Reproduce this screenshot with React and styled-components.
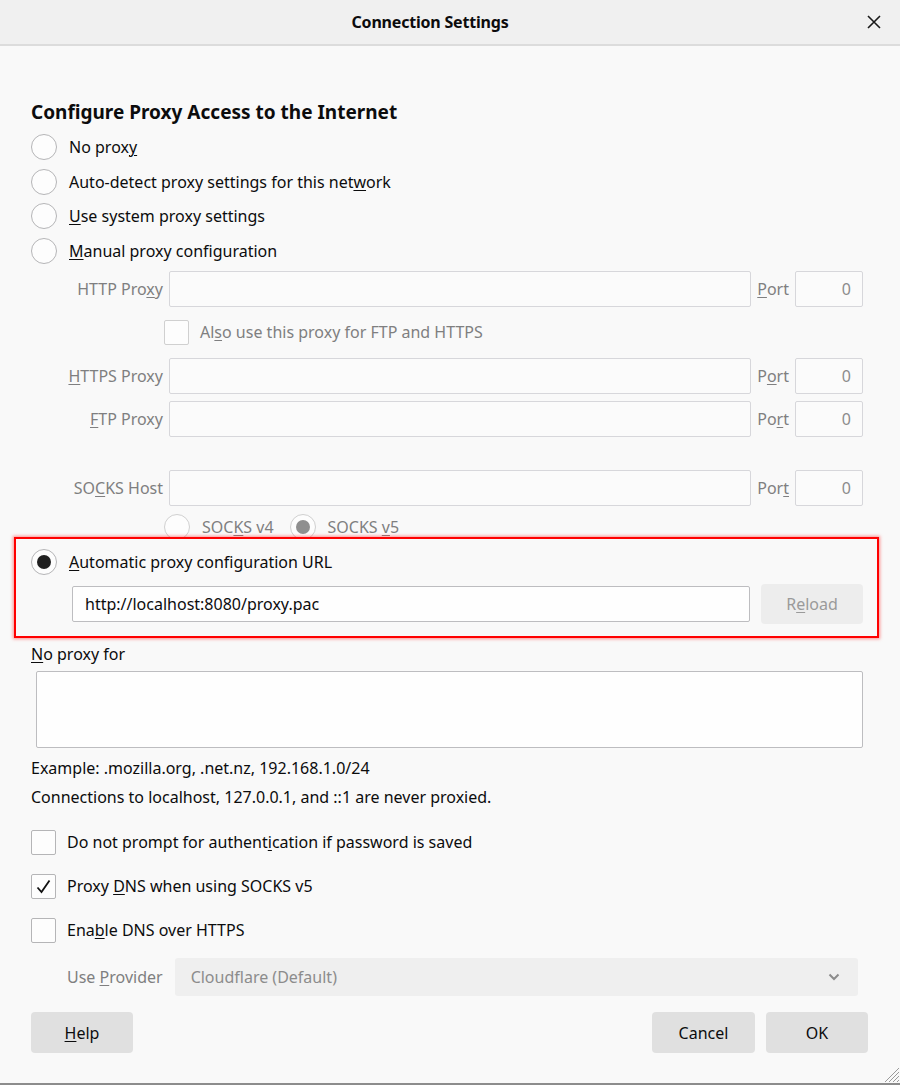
import React from "react";
import styled, { createGlobalStyle } from "styled-components";

const GlobalStyle = createGlobalStyle`
  html, body { margin: 0; padding: 0; background: #f9f9f9; }
  body { font-family: "Noto Sans", "Open Sans", sans-serif; color: #0c0c0d; }
  * { box-sizing: border-box; }
`;

const Window = styled.div`
  width: 900px;
  height: 1085px;
  background: #f9f9f9;
  display: flex;
  flex-direction: column;
  position: relative;
  border-bottom: 2px solid #8c8c8c;
  overflow: hidden;
`;

const TitleBar = styled.div`
  height: 46px;
  flex: none;
  display: flex;
  align-items: center;
  background: #f0f0f0;
  border-bottom: 2px solid #dcdcdc;
`;

const Title = styled.div`
  flex: 1;
  text-align: center;
  font-weight: 700;
  font-size: 16px;
  letter-spacing: -0.2px;
`;

const CloseBtn = styled.div`
  width: 28px;
  margin-right: 12px;
  display: flex;
  justify-content: center;
  align-items: center;
`;

const Content = styled.div`
  padding: 0 37px 0 31px;
  display: flex;
  flex-direction: column;
`;

const Heading = styled.h1`
  margin: 54px 0 0;
  font-size: 19px;
  line-height: 24px;
  font-weight: 700;
  letter-spacing: 0;
`;

const U = styled.span`
  text-decoration: underline;
  text-underline-offset: 2px;
  text-decoration-thickness: 1px;
`;

const RadioGroup = styled.div`
  margin-top: 5.6px;
  display: flex;
  flex-direction: column;
`;

const RadioRow = styled.div`
  height: ${(p) => p.$h || 34.7}px;
  display: flex;
  align-items: center;
  gap: ${(p) => p.$gap || 12}px;
  font-size: 16px;
  color: ${(p) => (p.$disabled ? "#7f7f80" : "#0c0c0d")};
`;

const RadioCircle = styled.span`
  width: 26px;
  height: 26px;
  flex: none;
  border-radius: 50%;
  border: 1.5px solid ${(p) => (p.$disabled ? "#d0d0d0" : "#b5b5b7")};
  background: #fdfdfd;
  display: flex;
  align-items: center;
  justify-content: center;
  &::after {
    content: "";
    display: ${(p) => (p.$checked ? "block" : "none")};
    width: 14px;
    height: 14px;
    border-radius: 50%;
    background: ${(p) => (p.$disabled ? "#8f8f8f" : "#202020")};
  }
`;

const Radio = ({ checked, disabled, children, h, gap }) => (
  <RadioRow $disabled={disabled} $h={h} $gap={gap}>
    <RadioCircle $checked={checked} $disabled={disabled} />
    <span>{children}</span>
  </RadioRow>
);

const ProxyGrid = styled.div`
  display: grid;
  grid-template-columns: 132px 1fr auto 68px;
  column-gap: 6px;
  align-items: center;
  height: 36px;
  margin-top: ${(p) => p.$mt || 0}px;
  font-size: 16px;
  color: #7f7f80;
`;

const FieldLabel = styled.span`
  text-align: right;
`;

const TextBox = styled.div`
  height: ${(p) => p.$h || 36}px;
  border: 1px solid #d7d7db;
  border-radius: 2px;
  display: flex;
  align-items: center;
  justify-content: ${(p) => (p.$right ? "flex-end" : "flex-start")};
  padding: 0 11px;
  font-size: 16px;
  color: ${(p) => (p.$dark ? "#0c0c0d" : "#8c8c8c")};
  border-color: ${(p) => (p.$dark ? "#bdbdc0" : "#d7d7db")};
  background: ${(p) => (p.$dark ? "#fefefe" : "#fbfbfb")};
`;

const ProxyRow = ({ label, port, mt }) => (
  <ProxyGrid $mt={mt}>
    <FieldLabel>{label}</FieldLabel>
    <TextBox />
    <span>{port}</span>
    <TextBox $right>0</TextBox>
  </ProxyGrid>
);

const CheckRow = styled.div`
  display: flex;
  align-items: center;
  gap: ${(p) => p.$gap || 11}px;
  height: ${(p) => p.$h || 44}px;
  margin-left: ${(p) => p.$ml || 0}px;
  margin-top: ${(p) => p.$mt || 0}px;
  font-size: 16px;
  color: ${(p) => (p.$disabled ? "#7f7f80" : "#0c0c0d")};
`;

const CheckBox = styled.span`
  width: 25px;
  height: 25px;
  flex: none;
  border: 1.5px solid ${(p) => (p.$disabled ? "#d0d0d0" : "#b5b5b7")};
  border-radius: 2px;
  background: #fdfdfd;
  display: flex;
  align-items: center;
  justify-content: center;
`;

const SocksRow = styled.div`
  display: flex;
  align-items: center;
  margin: 8px 0 0 133px;
  height: 26px;
  gap: 16px;
`;

const Highlight = styled.div`
  position: relative;
  margin: -3px -16px 0 -17px;
  border: 2px solid #ff0000;
  box-shadow: 0 0 3px 1px rgba(255, 40, 40, 0.5);
  background: #f9f9f9;
  padding: 6px 14px 12px 15px;
  display: flex;
  flex-direction: column;
`;

const UrlRow = styled.div`
  display: flex;
  align-items: center;
  gap: 11px;
  margin: 5px 0 0 41px;
`;

const UrlInput = styled(TextBox)`
  flex: 1;
  padding-left: 12px;
`;

const Button = styled.div`
  width: ${(p) => p.$w || 102}px;
  height: ${(p) => p.$h || 41}px;
  flex: none;
  border-radius: 4px;
  background: ${(p) => (p.$disabled ? "#ededed" : "#e0e0e0")};
  color: ${(p) => (p.$disabled ? "#9a9a9a" : "#0c0c0d")};
  display: flex;
  align-items: center;
  justify-content: center;
  font-size: 16px;
`;

const TextLine = styled.div`
  font-size: 16px;
  line-height: 22px;
  margin-top: ${(p) => p.$mt || 0}px;
`;

const TextArea = styled.div`
  margin: 6px 0 0 5px;
  height: 77px;
  border: 1px solid #bdbdc0;
  border-radius: 2px;
  background: #fefefe;
`;

const ProviderRow = styled.div`
  display: flex;
  align-items: center;
  gap: 12px;
  margin: 6px 5px 0 36px;
  font-size: 16px;
  color: #7f7f80;
`;

const Select = styled.div`
  flex: 1;
  height: 38px;
  border-radius: 3px;
  background: #efefef;
  display: flex;
  align-items: center;
  justify-content: space-between;
  padding: 0 18px 0 16px;
  color: #8c8c8c;
`;

const Footer = styled.div`
  display: flex;
  justify-content: space-between;
  margin: 16px -5px 0 0;
`;

const ButtonGroup = styled.div`
  display: flex;
  gap: 11px;
`;

const Grip = styled.svg`
  position: absolute;
  right: 0;
  bottom: 0;
`;

export default function App() {
  return (
    <>
      <GlobalStyle />
      <Window>
        <TitleBar>
          <Title>Connection Settings</Title>
          <CloseBtn>
            <svg width="14" height="14" viewBox="0 0 14 14">
              <path d="M1 1 L13 13 M13 1 L1 13" stroke="#1a1a1a" strokeWidth="1.6" />
            </svg>
          </CloseBtn>
        </TitleBar>
        <Content>
          <Heading>Configure Proxy Access to the Internet</Heading>
          <RadioGroup>
            <Radio>
              No prox<U>y</U>
            </Radio>
            <Radio>
              Auto-detect proxy settings for this net<U>w</U>ork
            </Radio>
            <Radio>
              <U>U</U>se system proxy settings
            </Radio>
            <Radio>
              <U>M</U>anual proxy configuration
            </Radio>
          </RadioGroup>

          <ProxyRow
            mt={2.3}
            label={<>HTTP Pro<U>x</U>y</>}
            port={<><U>P</U>ort</>}
          />
          <CheckRow $ml={133} $h={25} $mt={13} $disabled>
            <CheckBox $disabled />
            <span>
              Al<U>s</U>o use this proxy for FTP and HTTPS
            </span>
          </CheckRow>
          <ProxyRow
            mt={13}
            label={<><U>H</U>TTPS Proxy</>}
            port={<>P<U>o</U>rt</>}
          />
          <ProxyRow
            mt={7}
            label={<><U>F</U>TP Proxy</>}
            port={<>Po<U>r</U>t</>}
          />
          <ProxyRow
            mt={33}
            label={<>SO<U>C</U>KS Host</>}
            port={<>Por<U>t</U></>}
          />
          <SocksRow>
            <Radio disabled h={26}>
              SOC<U>K</U>S v4
            </Radio>
            <Radio disabled checked h={26}>
              SOCKS <U>v</U>5
            </Radio>
          </SocksRow>

          <Highlight>
            <Radio checked>
              <U>A</U>utomatic proxy configuration URL
            </Radio>
            <UrlRow>
              <UrlInput $dark>http://localhost:8080/proxy.pac</UrlInput>
              <Button $disabled $h={40}>
                R<U>e</U>load
              </Button>
            </UrlRow>
          </Highlight>

          <TextLine $mt={5}>
            <U>N</U>o proxy for
          </TextLine>
          <TextArea />
          <TextLine $mt={9}>Example: .mozilla.org, .net.nz, 192.168.1.0/24</TextLine>
          <TextLine $mt={7}>Connections to localhost, 127.0.0.1, and ::1 are never proxied.</TextLine>

          <CheckRow $mt={12}>
            <CheckBox />
            <span>
              Do not prompt for authent<U>i</U>cation if password is saved
            </span>
          </CheckRow>
          <CheckRow>
            <CheckBox>
              <svg width="17" height="17" viewBox="0 0 17 17">
                <path d="M2.5 9.5 L6.5 14 L14.5 2.5" fill="none" stroke="#111" strokeWidth="1.8" />
              </svg>
            </CheckBox>
            <span>
              Proxy <U>D</U>NS when using SOCKS v5
            </span>
          </CheckRow>
          <CheckRow>
            <CheckBox />
            <span>
              Ena<U>b</U>le DNS over HTTPS
            </span>
          </CheckRow>
          <ProviderRow>
            <span>
              Use <U>P</U>rovider
            </span>
            <Select>
              <span>Cloudflare (Default)</span>
              <svg width="12" height="8" viewBox="0 0 12 8">
                <path d="M1.5 1.5 L6 6 L10.5 1.5" fill="none" stroke="#8c8c8c" strokeWidth="2" />
              </svg>
            </Select>
          </ProviderRow>

          <Footer>
            <Button>
              <U>H</U>elp
            </Button>
            <ButtonGroup>
              <Button $w={103}>Cancel</Button>
              <Button>OK</Button>
            </ButtonGroup>
          </Footer>
        </Content>
        <Grip width="16" height="16" viewBox="0 0 16 16">
          <path d="M15 5 L5 15 M15 9 L9 15 M15 13 L13 15 M15 1 L1 15" stroke="#9a9a9a" strokeWidth="1" />
        </Grip>
      </Window>
    </>
  );
}
